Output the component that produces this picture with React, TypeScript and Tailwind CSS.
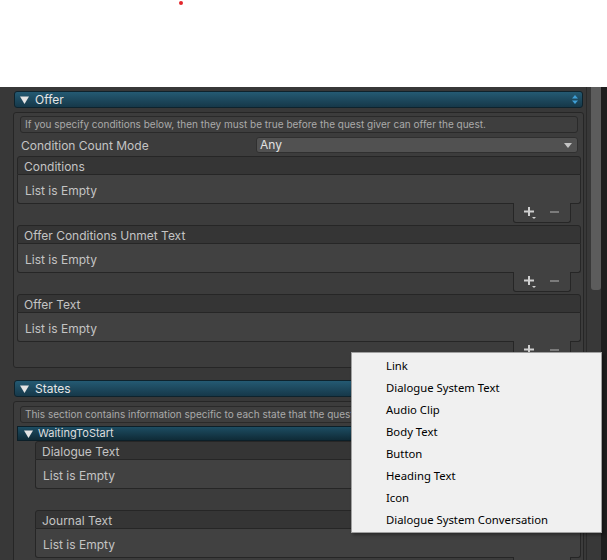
const MENU_ITEMS = [
  "Link",
  "Dialogue System Text",
  "Audio Clip",
  "Body Text",
  "Button",
  "Heading Text",
  "Icon",
  "Dialogue System Conversation",
];

function Caret({ size = 9 }: { size?: number }) {
  return (
    <svg width={size} height={size - 1} viewBox="0 0 9 8" className="shrink-0">
      <path d="M0 0.5h9L4.5 8z" fill="#e4e4e4" />
    </svg>
  );
}

function UpDown() {
  return (
    <svg width="6" height="9" viewBox="0 0 6 9" className="shrink-0">
      <path d="M0 3.5L3 0l3 3.5z" fill="#3f9fd6" />
      <path d="M0 5.5h6L3 9z" fill="#3f9fd6" />
    </svg>
  );
}

function FoldoutHeader({ title }: { title: string }) {
  return (
    <div className="mx-px h-[17px] flex items-center pl-[5px] pr-[4px] gap-[6px] rounded-[3px] border border-[#0e232d] bg-linear-to-b from-[#245a73] to-[#163849] text-[12px] text-[#e6e6e6]">
      <Caret />
      <span className="leading-none">{title}</span>
      <div className="flex-1" />
      <UpDown />
    </div>
  );
}

function AddRemove() {
  return (
    <div className="flex justify-end pr-[10px]">
      <div className="relative -mt-px h-[20px] w-[58px] flex items-center pl-[10px] gap-[13px] bg-[#414141] border-x border-b border-[#262626] rounded-b-[3px]">
        <svg width="13" height="12" viewBox="0 0 13 12">
          <rect x="0" y="3.5" width="10" height="2" fill="#cfcfcf" />
          <rect x="4" y="0" width="2" height="9" fill="#cfcfcf" />
          <path d="M8 10h4l-2 2z" fill="#cfcfcf" />
        </svg>
        <svg width="9" height="2" viewBox="0 0 9 2" className="-mt-[2px]">
          <rect x="0" y="0" width="9" height="2" fill="#7b7b7b" />
        </svg>
      </div>
    </div>
  );
}

function ListBox({ title, className = "" }: { title: string; className?: string }) {
  return (
    <div className={"flex flex-col " + className}>
      <div className="h-[19px] flex items-center pl-[6px] pt-[2px] bg-[#353535] border border-[#262626] rounded-t-[3px] text-[12px] text-[#c4c4c4]">
        {title}
      </div>
      <div className="h-[29px] flex items-center pl-[7px] pt-[3px] bg-[#414141] border-x border-b border-[#262626] rounded-b-[3px] text-[12px] text-[#c4c4c4]">
        List is Empty
      </div>
      <AddRemove />
    </div>
  );
}

function HelpBox({ text }: { text: string }) {
  return (
    <div className="mx-[3px] h-[17px] flex items-center pl-[4px] rounded-[3px] border border-[#2a2a2a] bg-[#3e3e3e] text-[10px] text-[#aaaaaa] whitespace-nowrap overflow-hidden">
      {text}
    </div>
  );
}

export default function App() {
  return (
    <div className="relative w-[607px] h-[560px] overflow-hidden bg-white font-['Inter',sans-serif]">
      <div className="h-[87px] pt-px">
        <div className="ml-[179px] w-[4px] h-[4px] rounded-full bg-[#e3262b]" />
      </div>

      <div className="flex h-[473px]">
        <div className="w-[586px] bg-[#383838] overflow-hidden pl-[13px] pr-[2px] pt-[4px]">
          <FoldoutHeader title="Offer" />
          <div className="mt-[4px] rounded-[3px] border border-[#262626] bg-[#3c3c3c] pl-[3px] pr-[2px] pt-[3px] pb-[6px]">
            <HelpBox text="If you specify conditions below, then they must be true before the quest giver can offer the quest." />
            <div className="mt-[4px] h-[16px] flex items-center ml-[4px] mr-[3px]">
              <span className="w-[235px] pt-[2px] text-[12px] text-[#c4c4c4]">Condition Count Mode</span>
              <div className="flex-1 h-[16px] flex items-center pl-[3px] pr-[5px] rounded-[3px] border border-[#303030] bg-[#515151] text-[12px] text-[#e2e2e2]">
                <span className="flex-1">Any</span>
                <svg width="8" height="5" viewBox="0 0 8 5">
                  <path d="M0 0h8L4 5z" fill="#c4c4c4" />
                </svg>
              </div>
            </div>
            <ListBox title="Conditions" className="mt-[3px]" />
            <ListBox title="Offer Conditions Unmet Text" className="mt-[2px]" />
            <ListBox title="Offer Text" className="mt-[2px]" />
          </div>

          <div className="mt-[12px]">
            <FoldoutHeader title="States" />
          </div>
          <div className="mt-[4px] rounded-[3px] border border-[#262626] bg-[#3c3c3c] pl-[3px] pr-[2px] pt-[4px] pb-[6px]">
            <HelpBox text="This section contains information specific to each state that the quest can be in." />
            <div className="mt-[3px] h-[15px] flex items-center gap-[5px] pl-[6px] border border-[#0c1f28] bg-linear-to-b from-[#1d4d63] to-[#0f2b37] text-[11px] text-[#dedede]">
              <Caret size={9} />
              <span className="leading-none">WaitingToStart</span>
            </div>
            <div className="ml-[18px]">
              <ListBox title="Dialogue Text" />
              <ListBox title="Journal Text" className="mt-[2px]" />
            </div>
          </div>
        </div>
        <div className="w-[15px] bg-[#383838] border-l border-[#2a2a2a] flex justify-end">
          <div className="w-[10px] h-[203px] bg-[#5c5c5c] rounded-b-[3px]" />
        </div>
        <div className="w-[6px] bg-[#1e1e1e]" />
      </div>

      <div className="absolute left-[351px] top-[352px] w-[251px] h-[181px] bg-[#f0f0f0] border border-[#a0a0a0] shadow-[2px_2px_3px_rgba(0,0,0,0.35)] pt-[2px] font-['Noto_Sans',sans-serif]">
        {MENU_ITEMS.map((item) => (
          <div key={item} className="h-[22px] flex items-center pl-[34px] text-[11.3px] text-black">
            {item}
          </div>
        ))}
      </div>
    </div>
  );
}
